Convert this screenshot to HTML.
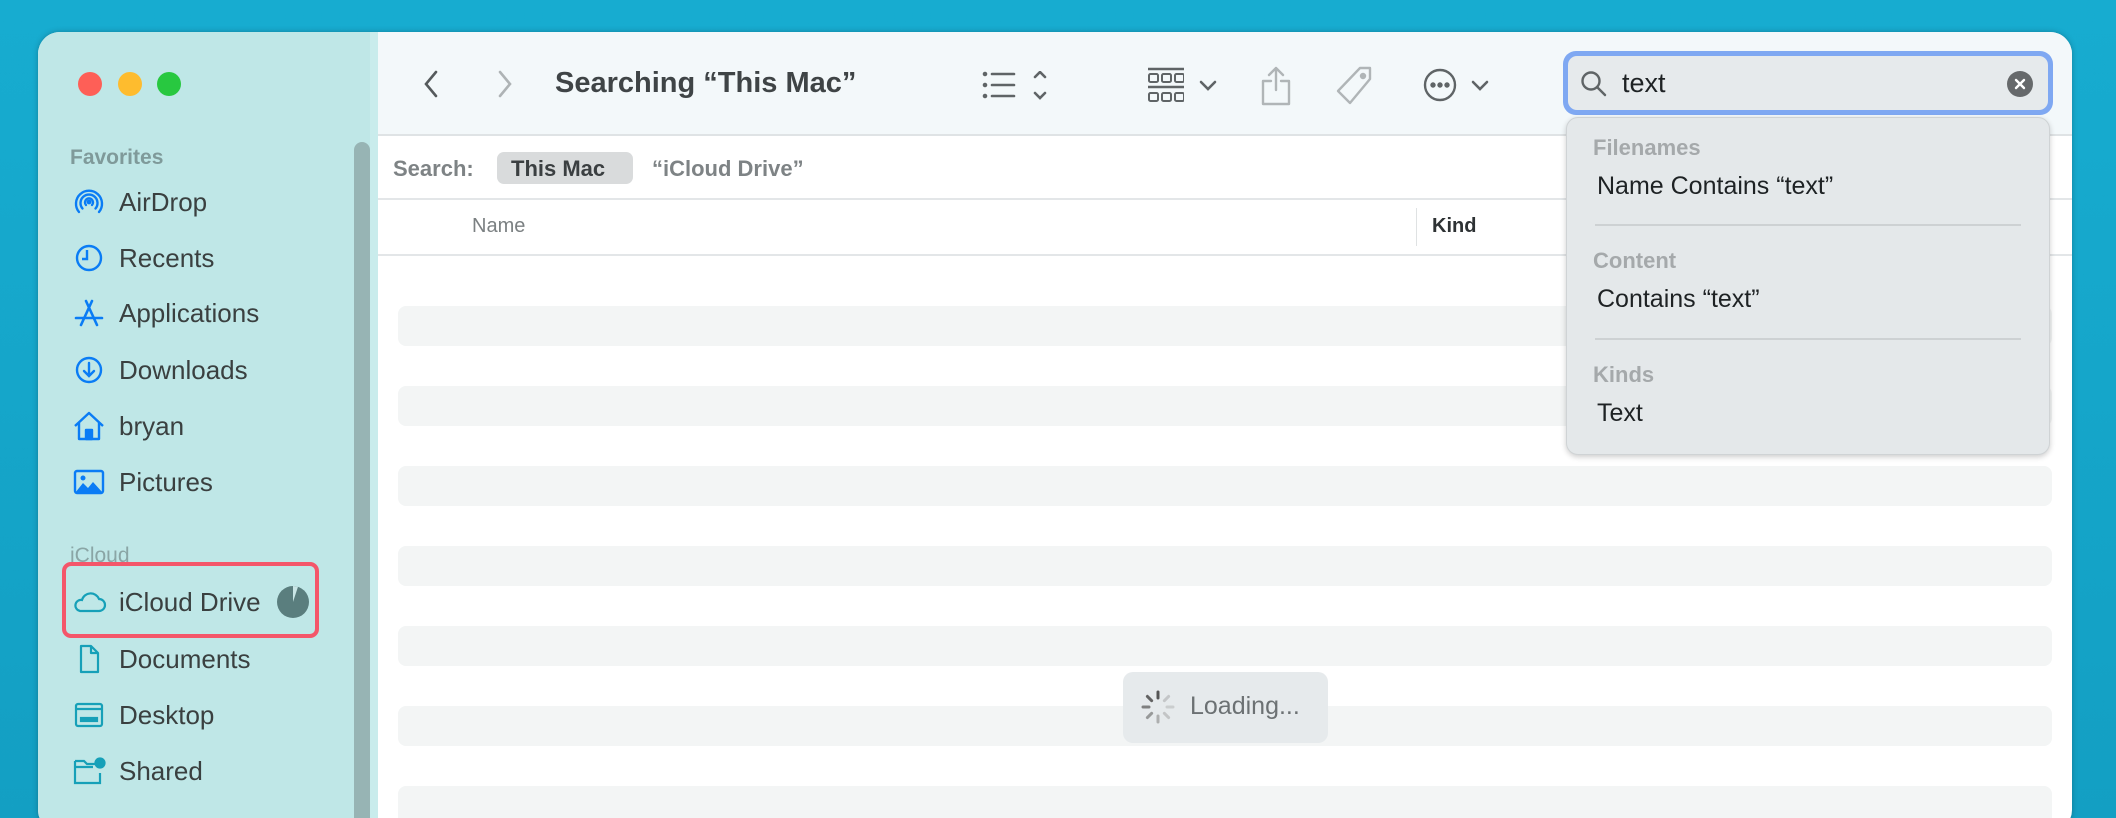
<!DOCTYPE html>
<html><head><meta charset="utf-8"><style>
*{box-sizing:border-box;margin:0;padding:0}
html,body{width:2116px;height:818px;overflow:hidden}
body{background:linear-gradient(180deg,#17acd0,#139fc3);font-family:"Liberation Sans",sans-serif;position:relative}
.win{position:absolute;left:38px;top:32px;width:2034px;height:800px;border-radius:22px;background:#fff;overflow:hidden;box-shadow:0 0 6px rgba(0,0,0,.25)}
.side{position:absolute;left:0;top:0;width:340px;height:100%;background:#bfe7e7}
.scroll{position:absolute;left:316px;top:110px;width:16px;height:700px;background:#97b4b4;border-radius:8px 8px 0 0}
.sep{position:absolute;left:332px;top:0;width:8px;height:100%;background:#c9ecec}
.tl{position:absolute;top:40px;width:24px;height:24px;border-radius:50%}
.sh{position:absolute;left:32px;font-size:21px;color:#7f9a9a;font-weight:bold}
.it{position:absolute;left:81px;font-size:26px;color:#3a4040;line-height:30px}
.ic{position:absolute;left:33px;width:36px;height:36px}
.tb{position:absolute;left:0;top:0;right:0;height:104px;background:#f3f8fa;border-bottom:2px solid #dfe3e5}
.main{position:absolute;left:340px;top:0;right:0;bottom:0}
.stripe{position:absolute;left:20px;right:20px;height:40px;background:#f3f5f5;border-radius:8px}
</style></head><body>
<div class="win">
 <div class="side">
  <div class="tl" style="left:40px;background:#fe5f57"></div>
  <div class="tl" style="left:80px;background:#febc2e"></div>
  <div class="tl" style="left:119px;background:#28c840"></div>
  <div class="sh" style="top:114px">Favorites</div>
  <div class="sh" style="top:512px;font-weight:normal;color:#8aa5a5">iCloud</div>

  <svg class="ic" style="top:152px" viewBox="0 0 36 36" fill="none" stroke="#0a7cf5" stroke-width="2.4" stroke-linecap="round"><path d="M8 28A13 13 0 1 1 28 28"/><path d="M11.5 24.5A8.5 8.5 0 1 1 24.5 24.5"/><path d="M15 21A4 4 0 1 1 21 21"/><circle cx="18" cy="18" r="1.2" fill="#0a7cf5"/></svg>
  <div class="it" style="top:155px">AirDrop</div>
  <svg class="ic" style="top:208px" viewBox="0 0 36 36" fill="none" stroke="#0a7cf5" stroke-width="2.4"><circle cx="18" cy="18" r="12"/><path d="M16 10v9h-5"/></svg>
  <div class="it" style="top:211px">Recents</div>
  <svg class="ic" style="top:263px" viewBox="0 0 36 36" fill="none" stroke="#0a7cf5" stroke-width="2.6" stroke-linecap="round"><path d="M15 6l11 24M21 6L10 30M5 23h26"/></svg>
  <div class="it" style="top:266px">Applications</div>
  <svg class="ic" style="top:320px" viewBox="0 0 36 36" fill="none" stroke="#0a7cf5" stroke-width="2.4" stroke-linecap="round"><circle cx="18" cy="18" r="12"/><path d="M18 11v13M13 19l5 5 5-5"/></svg>
  <div class="it" style="top:323px">Downloads</div>
  <svg class="ic" style="top:376px" viewBox="0 0 36 36" fill="none" stroke="#0a7cf5" stroke-width="2.4" stroke-linejoin="round"><path d="M4 18L18 5l14 13M8 15v16h20V15"/><rect x="15" y="22" width="6" height="9" fill="#0a7cf5"/></svg>
  <div class="it" style="top:379px">bryan</div>
  <svg class="ic" style="top:432px" viewBox="0 0 36 36"><rect x="4" y="7" width="28" height="22" rx="2" fill="none" stroke="#0a7cf5" stroke-width="2.4"/><path d="M4 29l8-10 5 5 5-6 10 11z" fill="#0a7cf5"/><circle cx="12" cy="14" r="2.5" fill="#0a7cf5"/></svg>
  <div class="it" style="top:435px">Pictures</div>

  <div style="position:absolute;left:24px;top:530px;width:257px;height:76px;border:4px solid #f4566a;border-radius:9px"></div>
  <svg class="ic" style="top:552px" viewBox="0 0 36 36" fill="none" stroke="#16a0b8" stroke-width="2.2"><path d="M9 27h19a6 6 0 0 0 0-12 9 9 0 0 0-17 1 5.5 5.5 0 0 0-2 11z"/></svg>
  <div class="it" style="top:555px">iCloud Drive</div>
  <svg style="position:absolute;left:239px;top:554px" width="32" height="32" viewBox="0 0 32 32"><circle cx="16" cy="16" r="16" fill="#5a7e7e"/><path d="M16 16L16 0A16 16 0 0 1 21 .8z" fill="#c9e6e6"/></svg>
  <svg class="ic" style="top:609px" viewBox="0 0 36 36" fill="none" stroke="#16a0b8" stroke-width="2.2" stroke-linejoin="round"><path d="M10 5h10l7 7v19H10zM20 5v7h7"/></svg>
  <div class="it" style="top:612px">Documents</div>
  <svg class="ic" style="top:665px" viewBox="0 0 36 36" fill="none" stroke="#16a0b8" stroke-width="2.2"><rect x="5" y="7" width="26" height="22" rx="2"/><path d="M5 12h26"/><rect x="10" y="21" width="16" height="3" fill="#16a0b8"/></svg>
  <div class="it" style="top:668px">Desktop</div>
  <svg class="ic" style="top:721px" viewBox="0 0 36 36" fill="none" stroke="#16a0b8" stroke-width="2.2"><path d="M4 8h9l3 3h8M4 8v22h25V20M4 14h18"/><circle cx="29" cy="10" r="4.5" fill="#16a0b8"/></svg>
  <div class="it" style="top:724px">Shared</div>

  <div class="scroll"></div><div class="sep"></div>
 </div>
 <div class="main">
  <div class="tb">
   <svg style="position:absolute;left:42px;top:36px" width="24" height="32" viewBox="0 0 24 32" fill="none" stroke="#555a5c" stroke-width="2.6" stroke-linecap="round"><path d="M16 4L6 16l10 12"/></svg>
   <svg style="position:absolute;left:114px;top:36px" width="24" height="32" viewBox="0 0 24 32" fill="none" stroke="#aeb3b5" stroke-width="2.6" stroke-linecap="round"><path d="M8 4l10 12-10 12"/></svg>
   <div style="position:absolute;left:177px;top:35px;font-size:29px;font-weight:bold;color:#3f4446">Searching “This Mac”</div>
   <svg style="position:absolute;left:604px;top:39px" width="70" height="30" viewBox="0 0 70 30" fill="none" stroke="#5f6466" stroke-width="2.6" stroke-linecap="round"><path d="M10 3h22M10 14h22M10 25h22"/><circle cx="3" cy="3" r="1" fill="#5f6466"/><circle cx="3" cy="14" r="1" fill="#5f6466"/><circle cx="3" cy="25" r="1" fill="#5f6466"/><path d="M53 6l5-5 5 5M53 22l5 5 5-5"/></svg>
   <svg style="position:absolute;left:770px;top:35px" width="36" height="38" viewBox="0 0 36 38" fill="none" stroke="#5f6466" stroke-width="2"><path d="M0 2h36M0 20h36" stroke-width="2.4"/><rect x="1" y="7" width="9" height="8" rx="1.5"/><rect x="14" y="7" width="9" height="8" rx="1.5"/><rect x="27" y="7" width="9" height="8" rx="1.5"/><rect x="1" y="26" width="9" height="8" rx="1.5"/><rect x="14" y="26" width="9" height="8" rx="1.5"/><rect x="27" y="26" width="9" height="8" rx="1.5"/></svg>
   <svg style="position:absolute;left:820px;top:47px" width="20" height="14" viewBox="0 0 20 14" fill="none" stroke="#5f6466" stroke-width="2.6" stroke-linecap="round"><path d="M3 3l7 7 7-7"/></svg>
   <svg style="position:absolute;left:882px;top:33px" width="32" height="42" viewBox="0 0 32 42" fill="none" stroke="#b0b5b7" stroke-width="2.4" stroke-linecap="round" stroke-linejoin="round"><path d="M16 3v22M9 10l7-7 7 7M11 16H3v23h26V16h-8"/></svg>
   <svg style="position:absolute;left:958px;top:33px" width="40" height="42" viewBox="0 0 40 42" fill="none" stroke="#b0b5b7" stroke-width="2.4" stroke-linejoin="round"><path d="M24 3h10v11L14 38 2 26z"/><circle cx="27" cy="11" r="2" fill="#b0b5b7"/></svg>
   <svg style="position:absolute;left:1044px;top:35px" width="36" height="36" viewBox="0 0 36 36" fill="none" stroke="#5f6466" stroke-width="2.4"><circle cx="18" cy="18" r="15"/><circle cx="11" cy="18" r="1.5" fill="#5f6466"/><circle cx="18" cy="18" r="1.5" fill="#5f6466"/><circle cx="25" cy="18" r="1.5" fill="#5f6466"/></svg>
   <svg style="position:absolute;left:1092px;top:47px" width="20" height="14" viewBox="0 0 20 14" fill="none" stroke="#5f6466" stroke-width="2.6" stroke-linecap="round"><path d="M3 3l7 7 7-7"/></svg>
  </div>
  <div style="position:absolute;left:15px;top:124px;font-size:22px;font-weight:bold;color:#7e8385">Search:</div>
  <div style="position:absolute;left:119px;top:120px;width:136px;height:32px;border-radius:7px;background:#d9dbdc"></div>
  <div style="position:absolute;left:133px;top:124px;font-size:22px;font-weight:bold;color:#3b3f41">This Mac</div>
  <div style="position:absolute;left:274px;top:124px;font-size:22px;font-weight:bold;color:#7e8385">“iCloud Drive”</div>
  <div style="position:absolute;left:0;right:0;top:166px;height:2px;background:#e3e6e8"></div>
  <div style="position:absolute;left:94px;top:183px;font-size:20px;color:#7b8082">Name</div>
  <div style="position:absolute;left:1038px;top:176px;width:1px;height:38px;background:#dfe2e3"></div>
  <div style="position:absolute;left:1054px;top:183px;font-size:20px;font-weight:bold;color:#2e3234">Kind</div>
  <div style="position:absolute;left:0;right:0;top:222px;height:2px;background:#e3e6e8"></div>
  <div class="stripe" style="top:274px"></div>
  <div class="stripe" style="top:354px"></div>
  <div class="stripe" style="top:434px"></div>
  <div class="stripe" style="top:514px"></div>
  <div class="stripe" style="top:594px"></div>
  <div class="stripe" style="top:674px"></div>
  <div class="stripe" style="top:754px"></div>
  <div style="position:absolute;left:745px;top:640px;width:205px;height:71px;border-radius:10px;background:#e6eaec"></div>
  <svg style="position:absolute;left:762px;top:657px" width="36" height="36" viewBox="0 0 36 36" stroke-width="3" stroke-linecap="round"><g transform="translate(18 18)"><path d="M0-15v6" stroke="#555"/><path d="M0-15v6" stroke="#777" transform="rotate(45)" opacity=".3"/><path d="M0-15v6" stroke="#999" transform="rotate(90)" opacity=".35"/><path d="M0-15v6" stroke="#999" transform="rotate(135)" opacity=".45"/><path d="M0-15v6" stroke="#888" transform="rotate(180)" opacity=".6"/><path d="M0-15v6" stroke="#777" transform="rotate(225)" opacity=".7"/><path d="M0-15v6" stroke="#666" transform="rotate(270)" opacity=".8"/><path d="M0-15v6" stroke="#555" transform="rotate(315)" opacity=".9"/></g></svg>
  <div style="position:absolute;left:812px;top:660px;font-size:25px;color:#6c7173">Loading...</div>
 </div>
</div>
<div style="position:absolute;left:1563px;top:51px;width:490px;height:64px;border-radius:13px;background:#7fa8f2"></div>
<div style="position:absolute;left:1568px;top:56px;width:480px;height:54px;border-radius:9px;background:#e6eaec"></div>
<svg style="position:absolute;left:1580px;top:70px" width="28" height="28" viewBox="0 0 28 28" fill="none" stroke="#5f6466" stroke-width="2.4" stroke-linecap="round"><circle cx="11" cy="11" r="8.5"/><path d="M17 17l8 8"/></svg>
<div style="position:absolute;left:1622px;top:68px;font-size:27px;color:#1e2224">text</div>
<svg style="position:absolute;left:2007px;top:71px" width="26" height="26" viewBox="0 0 26 26"><circle cx="13" cy="13" r="13" fill="#66696b"/><path d="M9 9l8 8M17 9l-8 8" stroke="#fff" stroke-width="2.4" stroke-linecap="round"/></svg>
<div style="position:absolute;left:1566px;top:117px;width:484px;height:338px;border-radius:12px;background:#e4e8ea;box-shadow:0 2px 6px rgba(0,0,0,.2);border:1px solid #cfd3d5">
 <div style="position:absolute;left:26px;top:17px;font-size:22px;font-weight:bold;color:#a5a9ab">Filenames</div>
 <div style="position:absolute;left:30px;top:54px;font-size:25px;color:#1e2224">Name Contains “text”</div>
 <div style="position:absolute;left:28px;right:28px;top:106px;height:2px;background:#cdd1d3"></div>
 <div style="position:absolute;left:26px;top:130px;font-size:22px;font-weight:bold;color:#a5a9ab">Content</div>
 <div style="position:absolute;left:30px;top:167px;font-size:25px;color:#1e2224">Contains “text”</div>
 <div style="position:absolute;left:28px;right:28px;top:220px;height:2px;background:#cdd1d3"></div>
 <div style="position:absolute;left:26px;top:244px;font-size:22px;font-weight:bold;color:#a5a9ab">Kinds</div>
 <div style="position:absolute;left:30px;top:281px;font-size:25px;color:#1e2224">Text</div>
</div>
</body></html>
